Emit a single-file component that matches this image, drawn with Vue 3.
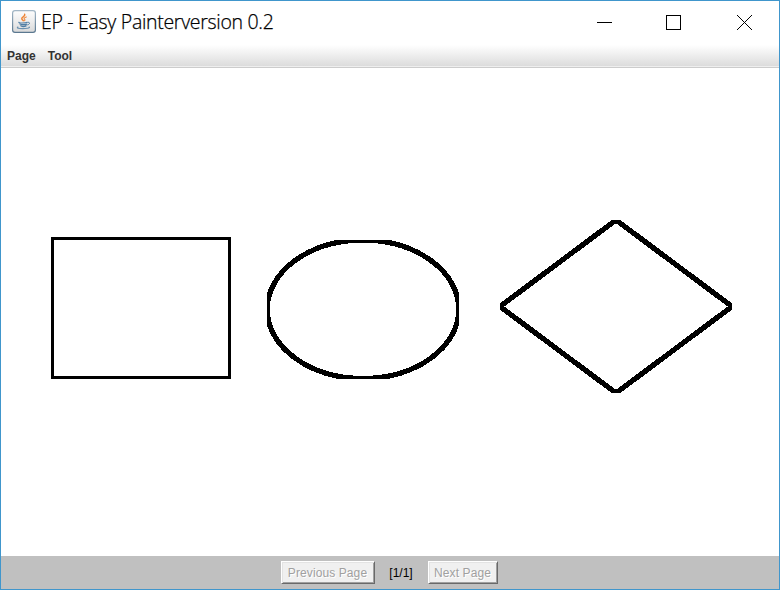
<script setup>
const menus = ['Page', 'Tool']
</script>

<template>
  <div class="window">
    <header class="titlebar">
      <svg class="logo" width="24" height="24" viewBox="0 0 24 24">
        <defs>
          <linearGradient id="face" x1="0" y1="0" x2="0" y2="1">
            <stop offset="0" stop-color="#fdfdfd" />
            <stop offset="0.5" stop-color="#ededed" />
            <stop offset="1" stop-color="#d9d9d9" />
          </linearGradient>
          <linearGradient id="rim" x1="0" y1="0" x2="0" y2="1">
            <stop offset="0" stop-color="#a3b7c6" />
            <stop offset="1" stop-color="#5b7890" />
          </linearGradient>
        </defs>
        <rect x="0.6" y="0.6" width="22.8" height="21.8" rx="2.4" fill="url(#face)" stroke="url(#rim)" stroke-width="1.2" />
        <g fill="none" stroke-linecap="round">
          <path d="M12.7 4.3c.9 2.2-3.8 2.7-2.9 4.6.2.7 1 1.1 1.5 1.8" stroke="#ee8434" stroke-width="1.5" />
          <path d="M14.3 6.9c-2.6 1-2.6 1.8-1.6 2.5.6.5.2.9-.3 1.3" stroke="#ef8b42" stroke-width="1.1" />
          <path d="M7 12.3c-1 .9 6.2 1 8.2 0" stroke="#507da3" stroke-width="1.2" />
          <path d="M8 14c1.5 1 5.2.9 6.8.2M8.8 15.8c1.3.8 4 .8 5.3.1" stroke="#507da3" stroke-width="1.3" />
          <path d="M16 12.3c2.2-.5 2.2 2-.2 2.6" stroke="#507da3" stroke-width="1" />
          <path d="M6 17.1c-3 1.3 4.5 2 9.5 1.1 1.9-.3 2.4-.8 1.6-1.2" stroke="#6a91b0" stroke-width="1.1" />
        </g>
      </svg>
      <span class="title">EP - Easy Painterversion 0.2</span>
      <div class="controls">
        <svg width="15" height="15" viewBox="0 0 15 15"><path d="M0 7.5H15" /></svg>
        <svg class="maximize" width="15" height="15" viewBox="0 0 15 15"><rect x=".5" y=".5" width="14" height="14" /></svg>
        <svg width="15" height="15" viewBox="0 0 15 15"><path d="M0 0L15 15M15 0L0 15" /></svg>
      </div>
    </header>
    <nav class="menubar">
      <span v-for="m in menus" :key="m">{{ m }}</span>
    </nav>
    <main class="canvas">
      <svg width="778" height="488" viewBox="1 68 778 488" shape-rendering="crispEdges" fill="none" stroke="#000">
        <defs>
          <clipPath id="ovalBounds"><rect x="267" y="240" width="192" height="139" /></clipPath>
          <clipPath id="diamondBounds"><rect x="500" y="220" width="232" height="173" /></clipPath>
        </defs>
        <rect x="52.5" y="238.5" width="177" height="139" stroke-width="3" />
        <g clip-path="url(#ovalBounds)"><ellipse cx="363" cy="309.3" rx="95.8" ry="69.2" stroke-width="5.2" /></g>
        <g clip-path="url(#diamondBounds)"><path d="M616 220L732 306.5L616 393L500 306.5Z" stroke-width="5.3" /></g>
      </svg>
    </main>
    <footer class="pager">
      <button class="prev" disabled>Previous Page</button>
      <span class="count">[1/1]</span>
      <button class="next" disabled>Next Page</button>
    </footer>
  </div>
</template>

<style>
body { margin: 0; }
</style>

<style scoped>
.window {
  box-sizing: border-box;
  width: 780px;
  height: 590px;
  border: 1px solid #4096cc;
  background: #fff;
  display: flex;
  flex-direction: column;
  font-family: "Liberation Sans", Arial, sans-serif;
}
.titlebar {
  box-sizing: border-box;
  height: 44px;
  display: flex;
  align-items: center;
  padding: 0 27px 2px 11px;
}
.title {
  margin-left: 5px;
  font: 300 19.5px/26px "Open Sans", "Noto Sans", sans-serif;
  letter-spacing: -0.3px;
  color: #000;
  -webkit-text-stroke: 0.25px #000;
  white-space: nowrap;
}
.controls {
  margin-left: auto;
  display: flex;
}
.maximize { margin: 0 56px 0 54px; }
.controls svg { fill: none; stroke: #000; stroke-width: 1; }
.menubar {
  box-sizing: border-box;
  height: 23px;
  display: flex;
  gap: 12px;
  padding: 0 6px;
  border-bottom: 1px solid #ccc;
  background: linear-gradient(#fff, #dadada);
  box-shadow: inset 0 -1px #eee;
  font-size: 12px;
  font-weight: bold;
  line-height: 23px;
  color: #333;
}
.canvas { height: 488px; }
.canvas svg { display: block; }
.pager {
  flex: 1;
  display: flex;
  justify-content: center;
  align-items: flex-start;
  padding: 5px 2px 0 0;
  background: #c0c0c0;
  font-size: 12px;
  line-height: 25px;
}
button {
  box-sizing: border-box;
  height: 23px;
  padding: 1px 0 0;
  border: 1px solid;
  border-color: #fff #696969 #696969 #fff;
  box-shadow: inset 1px 1px #e3e3e3, inset -1px -1px #a0a0a0;
  background: #f0f0f0;
  color: #a0a0a0;
  text-shadow: 1px 1px #fff;
  font: 12px/20px "Liberation Sans", Arial, sans-serif;
  letter-spacing: 0.1px;
  white-space: nowrap;
}
.prev { width: 94px; }
.next { width: 70px; }
.count { width: 53px; text-align: center; color: #000; }
</style>
